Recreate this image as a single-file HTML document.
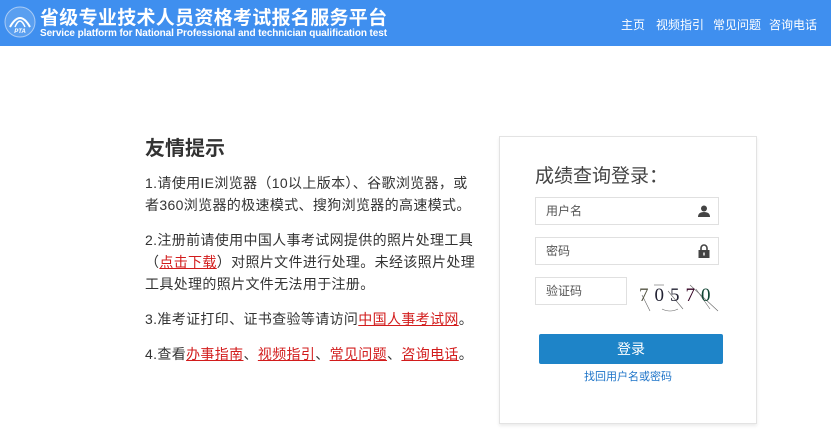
<!DOCTYPE html>
<html><head><meta charset="utf-8"><style>
*{margin:0;padding:0;box-sizing:border-box}
body{width:831px;height:430px;overflow:hidden;background:#fff;font-family:"Liberation Sans","Noto Sans CJK SC",sans-serif;position:relative}
.hd{position:absolute;left:0;top:0;width:831px;height:46px;background:#3f8fef;color:#fff}
.logo{position:absolute;left:4px;top:5px;width:32px;height:34px}
.t1{position:absolute;left:40px;top:3px;font-size:19px;font-weight:bold;letter-spacing:0.3px;white-space:nowrap}
.t2{position:absolute;left:40px;top:28px;font-size:10px;font-weight:bold;white-space:nowrap;letter-spacing:-0.1px}
.nav{position:absolute;top:16px;font-size:12px;white-space:nowrap}
.tip{position:absolute;left:145px;top:132px;color:#333;font-size:14px;white-space:nowrap}
.tip h2{font-size:20px;font-weight:bold;margin-bottom:11px;color:#333}
.tip p{line-height:22px;margin-bottom:13px;letter-spacing:0.35px}
.tip a{color:#d21c1c;text-decoration:underline}
.box{position:absolute;left:499px;top:136px;width:258px;height:288px;border:1px solid #e3e3e3;box-shadow:0 2px 3px rgba(0,0,0,.08)}
.box h3{position:absolute;left:35px;top:24px;font-size:19px;font-weight:normal;color:#444}
.in{position:absolute;left:35px;height:28px;border:1px solid #e0e0e0;font-size:12px;color:#555;padding-left:10px;line-height:26px}
.btn{position:absolute;left:39px;top:197px;width:184px;height:30px;background:#1e84c8;border-radius:2px;color:#fff;font-size:14px;text-align:center;line-height:30px}
.fg{position:absolute;left:0;width:256px;top:231px;text-align:center;font-size:11px;color:#1e74c8}
</style></head><body>
<div class="hd">
<svg class="logo" viewBox="0 0 32 34"><circle cx="16" cy="17" r="15" fill="#5a9ff0" stroke="#a9cbf5" stroke-width="1"/><path d="M6 22 Q16 4 26 22" fill="none" stroke="#fff" stroke-width="2"/><path d="M11 22 Q16 10 21 22" fill="none" stroke="#fff" stroke-width="1.5"/><text x="16" y="28" font-size="6" fill="#fff" text-anchor="middle" font-weight="bold" font-style="italic">PTA</text></svg>
<div class="t1">省级专业技术人员资格考试报名服务平台</div>
<div class="t2">Service platform for National Professional and technician qualification test</div>
<div class="nav" style="left:621px">主页</div>
<div class="nav" style="left:656px">视频指引</div>
<div class="nav" style="left:713px">常见问题</div>
<div class="nav" style="left:769px">咨询电话</div>
</div>
<div class="tip">
<h2>友情提示</h2>
<p>1.请使用IE浏览器（10以上版本）、谷歌浏览器，或<br>者360浏览器的极速模式、搜狗浏览器的高速模式。</p>
<p>2.注册前请使用中国人事考试网提供的照片处理工具<br>（<a>点击下载</a>）对照片文件进行处理。未经该照片处理<br>工具处理的照片文件无法用于注册。</p>
<p>3.准考证打印、证书查验等请访问<a>中国人事考试网</a>。</p>
<p>4.查看<a>办事指南</a>、<a>视频指引</a>、<a>常见问题</a>、<a>咨询电话</a>。</p>
</div>
<div class="box">
<h3>成绩查询登录：</h3>
<div class="in" style="top:60px;width:184px">用户名<svg style="position:absolute;right:8px;top:7px" width="12" height="12" viewBox="0 0 12 12"><circle cx="6" cy="3.5" r="3" fill="#444"/><path d="M0 12 Q0 7 6 7 Q12 7 12 12Z" fill="#444"/></svg></div>
<div class="in" style="top:100px;width:184px">密码<svg style="position:absolute;right:8px;top:6px" width="12" height="14" viewBox="0 0 12 14"><path d="M3 6V4a3 3 0 0 1 6 0v2" fill="none" stroke="#444" stroke-width="1.6"/><rect x="0.5" y="6" width="11" height="8" fill="#444"/><rect x="5.3" y="8.5" width="1.4" height="3" fill="#fff"/></svg></div>
<div class="in" style="top:140px;width:92px">验证码</div>
<svg style="position:absolute;left:138px;top:146px" width="82" height="30" viewBox="0 0 82 30"><g stroke="#666" stroke-width="0.6" fill="none"><path d="M4 12 L12 28"/><path d="M30 8 L45 26"/><path d="M52 2 L80 28"/><path d="M58 6 L72 26"/><path d="M16 2 L26 2"/><path d="M24 26 Q32 30 40 26"/></g></svg>
<div style="position:absolute;left:139px;top:148px;font-family:'Liberation Serif',serif;font-size:19px;letter-spacing:6px;color:#223"><span style="color:#554">7</span>0<span>5</span><span style="color:#302">7</span><span style="color:#143">0</span></div>
<div class="btn">登录</div>
<div class="fg">找回用户名或密码</div>
</div>
</body></html>
